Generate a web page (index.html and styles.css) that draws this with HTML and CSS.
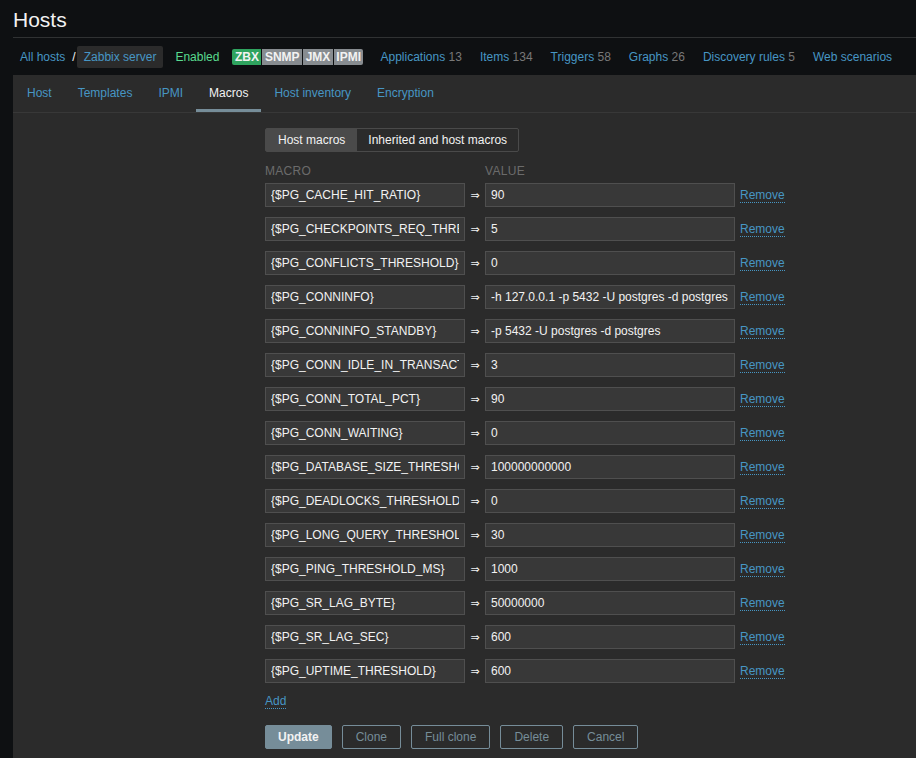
FILE: index.html
```html
<!DOCTYPE html>
<html>
<head>
<meta charset="utf-8">
<link rel="stylesheet" href="styles.css">
</head>
<body>
<div class="page">
  <header class="header">
    <h1 class="title">Hosts</h1>
  </header>
  <nav class="nav">
    <a class="link nav-first" href="#">All hosts</a>
    <span class="slash">/</span>
    <span class="crumb"><a class="link" href="#">Zabbix server</a></span>
    <span class="enabled">Enabled</span>
    <span class="badges">
      <span class="badge green">ZBX</span><span class="badge">SNMP</span><span class="badge">JMX</span><span class="badge">IPMI</span>
    </span>
    <a class="link nav-item" href="#">Applications <span class="count">13</span></a>
    <a class="link nav-item" href="#">Items <span class="count">134</span></a>
    <a class="link nav-item" href="#">Triggers <span class="count">58</span></a>
    <a class="link nav-item" href="#">Graphs <span class="count">26</span></a>
    <a class="link nav-item" href="#">Discovery rules <span class="count">5</span></a>
    <a class="link nav-item" href="#">Web scenarios</a>
  </nav>
  <main class="panel">
    <ul class="tabs">
      <li class="tab"><a class="link" href="#">Host</a></li>
      <li class="tab"><a class="link" href="#">Templates</a></li>
      <li class="tab"><a class="link" href="#">IPMI</a></li>
      <li class="tab active"><span>Macros</span></li>
      <li class="tab"><a class="link" href="#">Host inventory</a></li>
      <li class="tab"><a class="link" href="#">Encryption</a></li>
    </ul>
    <div class="form">
      <div class="segmented">
        <span class="seg selected">Host macros</span><span class="seg">Inherited and host macros</span>
      </div>
      <div class="heads">
        <span class="head head-macro">MACRO</span><span class="head">VALUE</span>
      </div>
      <div class="macros">
        <input class="field" type="text" value="{$PG_CACHE_HIT_RATIO}"><span class="arrow">⇒</span><input class="field" type="text" value="90"><a class="dotted" href="#">Remove</a>
        <input class="field" type="text" value="{$PG_CHECKPOINTS_REQ_THRESHOLD}"><span class="arrow">⇒</span><input class="field" type="text" value="5"><a class="dotted" href="#">Remove</a>
        <input class="field" type="text" value="{$PG_CONFLICTS_THRESHOLD}"><span class="arrow">⇒</span><input class="field" type="text" value="0"><a class="dotted" href="#">Remove</a>
        <input class="field" type="text" value="{$PG_CONNINFO}"><span class="arrow">⇒</span><input class="field" type="text" value="-h 127.0.0.1 -p 5432 -U postgres -d postgres"><a class="dotted" href="#">Remove</a>
        <input class="field" type="text" value="{$PG_CONNINFO_STANDBY}"><span class="arrow">⇒</span><input class="field" type="text" value="-p 5432 -U postgres -d postgres"><a class="dotted" href="#">Remove</a>
        <input class="field" type="text" value="{$PG_CONN_IDLE_IN_TRANSACTION}"><span class="arrow">⇒</span><input class="field" type="text" value="3"><a class="dotted" href="#">Remove</a>
        <input class="field" type="text" value="{$PG_CONN_TOTAL_PCT}"><span class="arrow">⇒</span><input class="field" type="text" value="90"><a class="dotted" href="#">Remove</a>
        <input class="field" type="text" value="{$PG_CONN_WAITING}"><span class="arrow">⇒</span><input class="field" type="text" value="0"><a class="dotted" href="#">Remove</a>
        <input class="field" type="text" value="{$PG_DATABASE_SIZE_THRESHOLD}"><span class="arrow">⇒</span><input class="field" type="text" value="100000000000"><a class="dotted" href="#">Remove</a>
        <input class="field" type="text" value="{$PG_DEADLOCKS_THRESHOLD}"><span class="arrow">⇒</span><input class="field" type="text" value="0"><a class="dotted" href="#">Remove</a>
        <input class="field" type="text" value="{$PG_LONG_QUERY_THRESHOLD}"><span class="arrow">⇒</span><input class="field" type="text" value="30"><a class="dotted" href="#">Remove</a>
        <input class="field" type="text" value="{$PG_PING_THRESHOLD_MS}"><span class="arrow">⇒</span><input class="field" type="text" value="1000"><a class="dotted" href="#">Remove</a>
        <input class="field" type="text" value="{$PG_SR_LAG_BYTE}"><span class="arrow">⇒</span><input class="field" type="text" value="50000000"><a class="dotted" href="#">Remove</a>
        <input class="field" type="text" value="{$PG_SR_LAG_SEC}"><span class="arrow">⇒</span><input class="field" type="text" value="600"><a class="dotted" href="#">Remove</a>
        <input class="field" type="text" value="{$PG_UPTIME_THRESHOLD}"><span class="arrow">⇒</span><input class="field" type="text" value="600"><a class="dotted" href="#">Remove</a>
      </div>
      <div class="add-row"><a class="dotted" href="#">Add</a></div>
      <div class="buttons">
        <button class="btn primary">Update</button>
        <button class="btn">Clone</button>
        <button class="btn">Full clone</button>
        <button class="btn">Delete</button>
        <button class="btn">Cancel</button>
      </div>
    </div>
  </main>
</div>
</body>
</html>
```
FILE: styles.css
```css
html, body {
  margin: 0;
  height: 100%;
  overflow: hidden;
}
body {
  background: #0e1012;
  color: #f2f2f2;
  font-family: "Liberation Sans", Arial, sans-serif;
  font-size: 12px;
}
.page {
  margin-left: 13px;
  height: 100%;
  display: flex;
  flex-direction: column;
}
.header {
  flex-shrink: 0;
  border-bottom: 1px solid #303233;
  height: 38px;
  box-sizing: border-box;
}
.title {
  margin: 0;
  padding-top: 8px;
  font-size: 21px;
  line-height: 24px;
  font-weight: normal;
  color: #f2f2f2;
}
.link {
  color: #4796c4;
  text-decoration: none;
}
.nav {
  flex-shrink: 0;
  height: 37px;
  display: flex;
  align-items: center;
  white-space: nowrap;
}
.nav-first {
  margin-left: 7px;
}
.slash {
  margin-left: 7px;
  color: #f2f2f2;
}
.crumb {
  margin-left: 1px;
  background: #2b2b2b;
  height: 22px;
  line-height: 22px;
  padding: 0 7px;
  border-radius: 2px;
}
.enabled {
  margin-left: 12px;
  color: #59db8f;
}
.badges {
  margin-left: 13px;
  display: flex;
  margin-right: 17px;
}
.badge {
  background: #878c90;
  color: #f2f2f2;
  font-weight: bold;
  height: 16px;
  line-height: 16px;
  padding: 0 2.5px;
  margin-right: 1px;
}
.badge:first-child {
  border-radius: 2px 0 0 2px;
}
.badge:last-child {
  border-radius: 0 2px 2px 0;
  margin-right: 0;
}
.badge.green {
  background: #2fa45f;
}
.nav-item {
  margin-right: 18px;
}
.count {
  color: #787878;
}
.panel {
  flex: 1;
  background: #2b2b2b;
}
.tabs {
  list-style: none;
  margin: 0;
  padding: 0 0 0 1px;
  display: flex;
  height: 37px;
  border-bottom: 1px solid #383838;
}
.tab {
  padding: 0 13px;
  line-height: 37px;
  height: 37px;
  box-sizing: border-box;
}
.tab.active {
  color: #f2f2f2;
  box-shadow: inset 0 -3px 0 #768d99;
}
.form {
  padding: 15px 0 0 252px;
}
.segmented {
  display: inline-flex;
  border: 1px solid #4a4a4a;
  border-radius: 2px;
  height: 24px;
  box-sizing: border-box;
  vertical-align: top;
}
.seg {
  line-height: 22px;
  padding: 0 11px;
  color: #f2f2f2;
}
.seg.selected {
  background: #4a4a4a;
  padding: 0 12px;
}
.heads {
  display: flex;
  height: 18px;
  line-height: 18px;
  margin-top: 10px;
  margin-bottom: 3px;
}
.head {
  color: #6b6b6b;
  letter-spacing: 0.3px;
}
.head-macro {
  width: 220px;
}
.macros {
  display: grid;
  grid-template-columns: 200px 20px 250px auto;
  grid-auto-rows: 24px;
  row-gap: 10px;
  align-items: center;
  justify-items: start;
}
.field {
  width: 100%;
  height: 24px;
  box-sizing: border-box;
  background: #383838;
  border: 1px solid #4f4f4f;
  color: #f2f2f2;
  font-family: "Liberation Sans", Arial, sans-serif;
  font-size: 12px;
  padding: 0 5px;
  margin: 0;
  outline: none;
  border-radius: 0;
}
.arrow {
  justify-self: center;
  font-family: "DejaVu Sans", sans-serif;
  font-size: 11px;
  color: #f2f2f2;
}
.dotted {
  color: #4796c4;
  text-decoration: none;
  border-bottom: 1px dotted #4796c4;
  margin-left: 5px;
  line-height: 14px;
}
.add-row {
  margin-top: 11px;
  height: 16px;
  line-height: 14px;
}
.add-row .dotted {
  margin-left: 0;
}
.buttons {
  margin-top: 15px;
  display: flex;
  gap: 10px;
}
.btn {
  height: 24px;
  box-sizing: border-box;
  padding: 0 13px;
  background: transparent;
  border: 1px solid #768d99;
  border-radius: 2px;
  color: #768d99;
  font-family: "Liberation Sans", Arial, sans-serif;
  font-size: 12px;
  margin: 0;
}
.btn.primary {
  background: #768d99;
  color: #f2f2f2;
  font-weight: bold;
  padding: 0 12px;
}
```
